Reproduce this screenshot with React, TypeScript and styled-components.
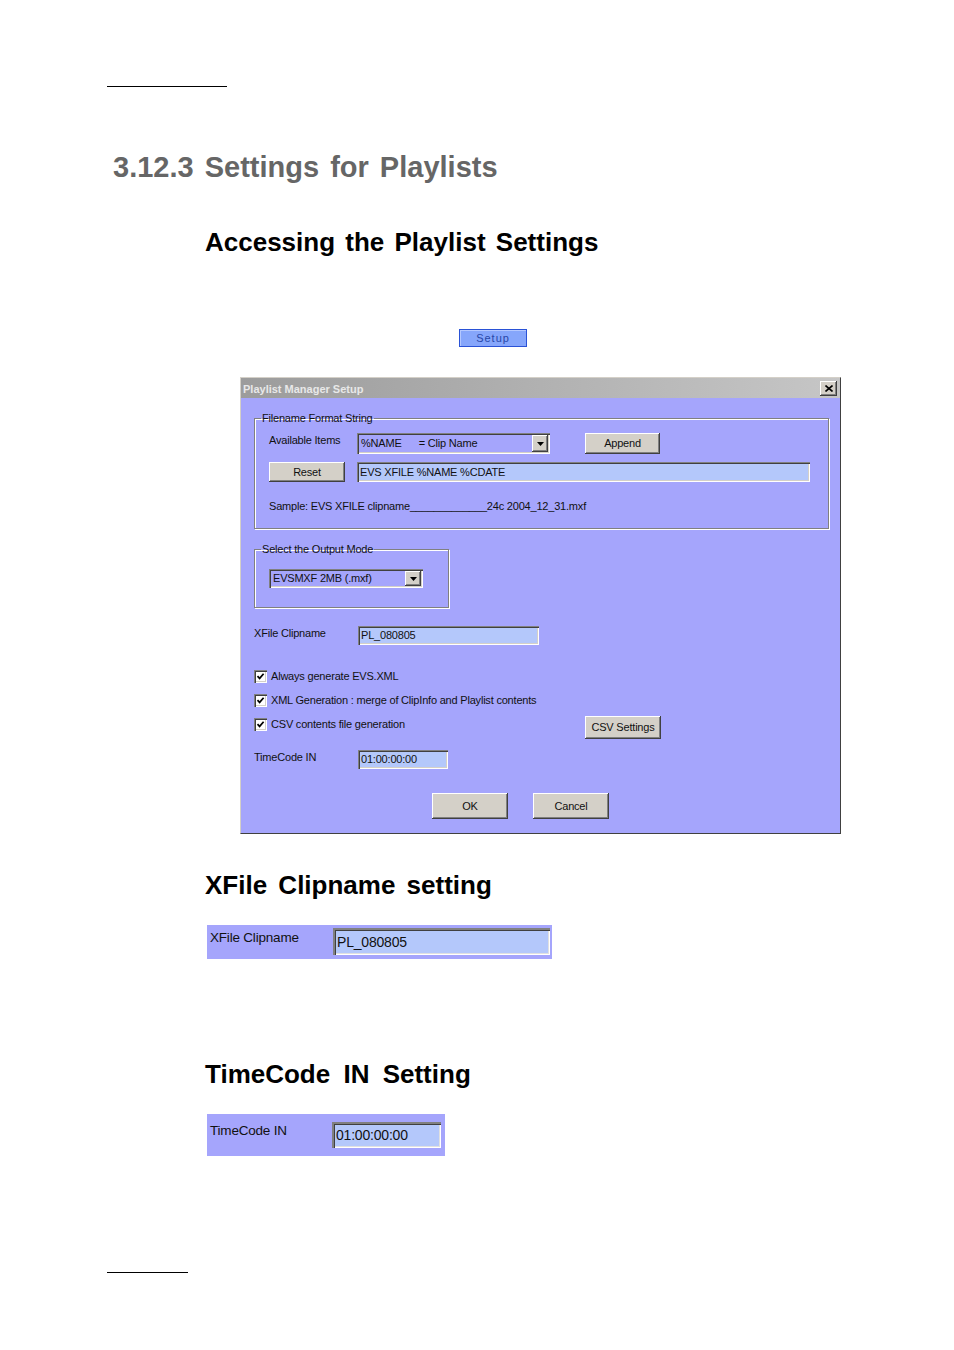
import React from "react";
import styled, { createGlobalStyle } from "styled-components";

const GlobalStyle = createGlobalStyle`
  html, body { margin: 0; padding: 0; background: #ffffff; }
  body { font-family: "Liberation Sans", Arial, sans-serif; }
  * { box-sizing: border-box; }
`;

const LAV = "#a5a5fc";

const Page = styled.main`
  width: 954px;
  height: 1350px;
  padding-top: 86px;
  overflow: hidden;
`;

const Rule = styled.hr<{ $w: number; $top: number }>`
  display: block;
  margin: ${(p) => p.$top}px 0 0 107px;
  width: ${(p) => p.$w}px;
  height: 0;
  border: 0;
  border-top: 1px solid #000;
`;

const ChapterTitle = styled.h1`
  margin: 63px 0 0 113px;
  height: 34px;
  font: bold 29px/34px "Liberation Sans", Arial, sans-serif;
  color: #666666;
  word-spacing: 3px;
  white-space: nowrap;
`;

const SectionTitle = styled.h2<{ $top: number; $ws: number }>`
  margin: ${(p) => p.$top}px 0 0 205px;
  height: 30px;
  font: bold 26px/30px "Liberation Sans", Arial, sans-serif;
  color: #000;
  word-spacing: ${(p) => p.$ws}px;
  white-space: nowrap;
`;

const SetupRow = styled.div`
  margin: 72px 0 0 459px;
  height: 18px;
  display: flex;
`;

const SetupButton = styled.div`
  width: 68px;
  height: 18px;
  background: #86a6fb;
  border: 1px solid #2a52d6;
  box-shadow: inset 1px 1px #b4c8ff;
  display: flex;
  align-items: center;
  justify-content: center;
  font: 11px "Liberation Sans", Arial, sans-serif;
  letter-spacing: 1px;
  color: #2846a8;
`;

const Dialog = styled.section`
  margin: 30px 0 0 240px;
  width: 601px;
  height: 457px;
  border: 1px solid;
  border-color: #d4d0c8 #404040 #404040 #d4d0c8;
  display: flex;
  flex-direction: column;
  background: ${LAV};
`;

const TitleBar = styled.div`
  flex: none;
  height: 20px;
  background: linear-gradient(to right, #9c9c9c, #c6c6c6);
  display: flex;
  align-items: center;
  justify-content: space-between;
  padding: 1px 3px 0 2px;
`;

const TitleText = styled.span`
  font: bold 11px "Liberation Sans", Arial, sans-serif;
  color: #e8e8e8;
`;

const raised = `
  box-shadow: inset -1px -1px #404040, inset 1px 1px #ffffff,
    inset -2px -2px #808080, inset 2px 2px #d4d0c8;
`;

const sunken = `
  box-shadow: inset 1px 1px #808080, inset 2px 2px #404040,
    inset -1px -1px #ffffff, inset -2px -2px #d4d0c8;
`;

const CloseButton = styled.div`
  width: 17px;
  height: 15px;
  background: #d4d0c8;
  ${raised}
  display: flex;
  align-items: center;
  justify-content: center;
`;

const DialogBody = styled.div`
  flex: 1;
  padding: 14px 10px 0 13px;
  display: flex;
  flex-direction: column;
  font: 11px/13px "Liberation Sans", Arial, sans-serif;
  color: #111;
  letter-spacing: -0.2px;
`;

const GroupBox = styled.fieldset<{ $w: number; $h: number; $top?: number }>`
  margin: ${(p) => p.$top ?? 0}px 0 0 0;
  width: ${(p) => p.$w}px;
  height: ${(p) => p.$h}px;
  min-width: 0;
  border: 1px solid #808080;
  box-shadow: inset 1px 1px #ffffff, 1px 1px #ffffff;
  padding: 0 0 0 14px;
  display: flex;
  flex-direction: column;
`;

const Legend = styled.legend`
  padding: 0 1px;
  margin-left: -8px;
  font: 11px/12px "Liberation Sans", Arial, sans-serif;
  letter-spacing: -0.2px;
  color: #111;
`;

const FormRow = styled.div<{ $top?: number }>`
  display: flex;
  align-items: flex-start;
  margin-top: ${(p) => p.$top ?? 0}px;
`;

const FieldLabel = styled.span<{ $w: number; $dy?: number }>`
  flex: none;
  width: ${(p) => p.$w}px;
  margin-top: ${(p) => p.$dy ?? 0}px;
  white-space: nowrap;
`;

const Combo = styled.div<{ $w: number; $h: number }>`
  flex: none;
  width: ${(p) => p.$w}px;
  height: ${(p) => p.$h}px;
  ${sunken}
  padding: 2px;
  display: flex;
  align-items: center;
`;

const ComboText = styled.span`
  flex: 1;
  padding-left: 2px;
  white-space: pre;
`;

const ComboArrow = styled.span`
  flex: none;
  width: 16px;
  height: 100%;
  background: #d4d0c8;
  ${raised}
  display: flex;
  align-items: center;
  justify-content: center;
`;

const TextField = styled.div<{ $w: number; $h: number; $ml?: number }>`
  flex: none;
  width: ${(p) => p.$w}px;
  height: ${(p) => p.$h}px;
  margin-left: ${(p) => p.$ml ?? 0}px;
  background: #b4c8fb;
  ${sunken}
  padding: 0 3px;
  display: flex;
  align-items: center;
  white-space: nowrap;
`;

const WinButton = styled.div<{ $w: number; $h: number; $ml?: number; $mt?: number }>`
  flex: none;
  width: ${(p) => p.$w}px;
  height: ${(p) => p.$h}px;
  margin-left: ${(p) => p.$ml ?? 0}px;
  margin-top: ${(p) => p.$mt ?? 0}px;
  background: #d4d0c8;
  ${raised}
  display: flex;
  align-items: center;
  justify-content: center;
  color: #111;
`;

const SampleLine = styled.div`
  margin-top: 18px;
  white-space: pre;
`;

const CheckRow = styled.div<{ $top: number }>`
  display: flex;
  align-items: flex-start;
  margin-top: ${(p) => p.$top}px;
`;

const CheckLabel = styled.label<{ $w?: number }>`
  flex: none;
  width: ${(p) => (p.$w ? `${p.$w}px` : "auto")};
  display: flex;
  align-items: center;
  gap: 4px;
  height: 13px;
  white-space: nowrap;
`;

const CheckBox = styled.span`
  flex: none;
  width: 13px;
  height: 13px;
  background: #ffffff;
  ${sunken}
  display: flex;
  align-items: center;
  justify-content: center;
`;

const ButtonBar = styled.div`
  display: flex;
  margin-top: 24px;
  padding-left: 178px;
  gap: 25px;
`;

const Snapshot = styled.div<{ $w: number; $h: number; $top: number; $pt: number }>`
  margin: ${(p) => p.$top}px 0 0 207px;
  width: ${(p) => p.$w}px;
  height: ${(p) => p.$h}px;
  background: ${LAV};
  padding: ${(p) => p.$pt}px 0 0 3px;
  display: flex;
  align-items: flex-start;
  font: 13.5px/16px "Liberation Sans", Arial, sans-serif;
  letter-spacing: -0.2px;
  color: #111;
`;

const BigField = styled.div<{ $w: number; $h: number }>`
  flex: none;
  width: ${(p) => p.$w}px;
  height: ${(p) => p.$h}px;
  background: #b4c8fb;
  box-shadow: inset 1px 1px #808080, inset 2px 2px #808080, inset 3px 3px #404040,
    inset -1px -1px #ffffff, inset -2px -2px #e0e0e0;
  padding: 0 4px;
  display: flex;
  align-items: center;
  font-size: 14px;
  white-space: nowrap;
`;

const Arrow = () => (
  <svg width="7" height="4" viewBox="0 0 7 4">
    <path d="M0 0H7L3.5 4Z" fill="#000" />
  </svg>
);

const Tick = () => (
  <svg width="9" height="9" viewBox="0 0 9 9">
    <path d="M1.5 4.2L3.6 6.4L7.6 1.8" fill="none" stroke="#000" strokeWidth="1.7" />
  </svg>
);

const Check: React.FC<{ label: string; w?: number }> = ({ label, w }) => (
  <CheckLabel $w={w}>
    <CheckBox>
      <Tick />
    </CheckBox>
    {label}
  </CheckLabel>
);

export default function App() {
  return (
    <>
      <GlobalStyle />
      <Page>
        <Rule $w={120} $top={0} />
        <ChapterTitle>3.12.3 Settings for Playlists</ChapterTitle>
        <SectionTitle $top={43} $ws={3}>Accessing the Playlist Settings</SectionTitle>

        <SetupRow>
          <SetupButton>Setup</SetupButton>
        </SetupRow>

        <Dialog>
          <TitleBar>
            <TitleText>Playlist Manager Setup</TitleText>
            <CloseButton>
              <svg width="8" height="7" viewBox="0 0 8 7">
                <path d="M0.5 0.5L7.5 6.5M7.5 0.5L0.5 6.5" stroke="#000" strokeWidth="1.6" />
              </svg>
            </CloseButton>
          </TitleBar>
          <DialogBody>
            <GroupBox $w={575} $h={117}>
              <Legend>Filename Format String</Legend>
              <FormRow $top={9}>
                <FieldLabel $w={88} $dy={1}>Available Items</FieldLabel>
                <Combo $w={193} $h={21}>
                  <ComboText>{"%NAME      = Clip Name"}</ComboText>
                  <ComboArrow>
                    <Arrow />
                  </ComboArrow>
                </Combo>
                <WinButton $w={75} $h={21} $ml={35}>Append</WinButton>
              </FormRow>
              <FormRow $top={8}>
                <WinButton $w={76} $h={20}>Reset</WinButton>
                <TextField $w={453} $h={20} $ml={12}>EVS XFILE %NAME %CDATE</TextField>
              </FormRow>
              <SampleLine>{"Sample: EVS XFILE clipname_____________24c 2004_12_31.mxf"}</SampleLine>
            </GroupBox>

            <GroupBox $w={195} $h={65} $top={14}>
              <Legend>Select the Output Mode</Legend>
              <FormRow $top={14}>
                <Combo $w={154} $h={19}>
                  <ComboText>EVSMXF 2MB (.mxf)</ComboText>
                  <ComboArrow>
                    <Arrow />
                  </ComboArrow>
                </Combo>
              </FormRow>
            </GroupBox>

            <FormRow $top={18}>
              <FieldLabel $w={104} $dy={1}>XFile Clipname</FieldLabel>
              <TextField $w={181} $h={19}>PL_080805</TextField>
            </FormRow>

            <CheckRow $top={25}>
              <Check label="Always generate EVS.XML" />
            </CheckRow>
            <CheckRow $top={11}>
              <Check label="XML Generation : merge of ClipInfo and Playlist contents" />
            </CheckRow>
            <CheckRow $top={11}>
              <Check label="CSV contents file generation" w={331} />
              <WinButton $w={76} $h={23} $mt={-2}>CSV Settings</WinButton>
            </CheckRow>

            <FormRow $top={11}>
              <FieldLabel $w={104} $dy={1}>TimeCode IN</FieldLabel>
              <TextField $w={90} $h={19}>01:00:00:00</TextField>
            </FormRow>

            <ButtonBar>
              <WinButton $w={76} $h={26}>OK</WinButton>
              <WinButton $w={76} $h={26}>Cancel</WinButton>
            </ButtonBar>
          </DialogBody>
        </Dialog>

        <SectionTitle $top={36} $ws={4}>XFile Clipname setting</SectionTitle>
        <Snapshot $w={345} $h={34} $top={25} $pt={3}>
          <FieldLabel $w={123} $dy={2}>XFile Clipname</FieldLabel>
          <BigField $w={217} $h={27}>PL_080805</BigField>
        </Snapshot>

        <SectionTitle $top={100} $ws={6}>TimeCode IN Setting</SectionTitle>
        <Snapshot $w={238} $h={42} $top={25} $pt={8}>
          <FieldLabel $w={122} $dy={1}>TimeCode IN</FieldLabel>
          <BigField $w={109} $h={26}>01:00:00:00</BigField>
        </Snapshot>

        <Rule $w={81} $top={116} />
      </Page>
    </>
  );
}
